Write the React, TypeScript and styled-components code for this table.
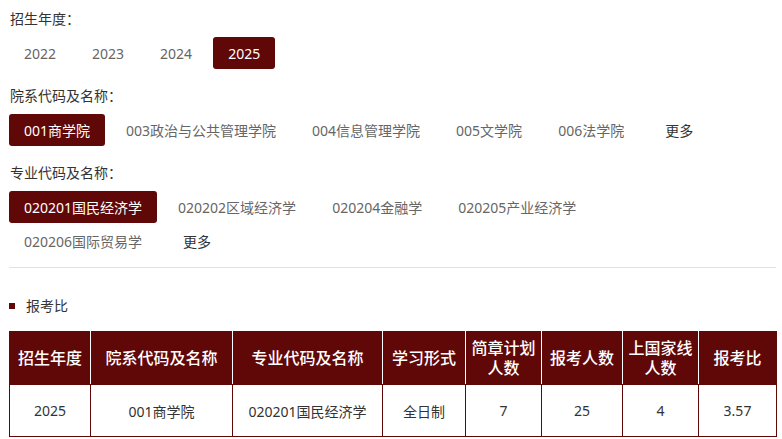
import React, { useState } from "react"
import styled, { createGlobalStyle } from "styled-components"

const GlobalStyle = createGlobalStyle`
  body {
    margin: 0;
    background: #ffffff;
    font-family: "Noto Sans", "Noto Sans CJK SC", sans-serif;
  }
`

const maroon = "#600808"

const Page = styled.div`
  padding: 8px 6px 0 9px;
  color: #333333;
`

const FilterGroup = styled.div<{ $last?: boolean }>`
  margin-bottom: ${(p) => (p.$last ? "0" : "16px")};
`

const Label = styled.div`
  font-size: 14px;
  line-height: 22px;
  color: #333333;
  padding-left: 1px;
  margin-bottom: 7px;
`

const Options = styled.div`
  display: flex;
  flex-wrap: wrap;
  gap: 2px 6px;
  max-width: 730px;
`

const Option = styled.button<{ $active?: boolean; $more?: boolean }>`
  height: 32px;
  padding: 0 ${(p) => (p.$more ? "20px" : "15px")};
  border: none;
  border-radius: 3px;
  font-family: inherit;
  font-size: 14px;
  cursor: pointer;
  background: ${(p) => (p.$active ? maroon : "transparent")};
  color: ${(p) => (p.$active ? "#ffffff" : p.$more ? "#333333" : "#666666")};
`

const Divider = styled.hr`
  margin: 10px 0 0;
  border: none;
  border-top: 1px solid #e2e2e2;
`

const SectionTitle = styled.div`
  display: flex;
  align-items: center;
  gap: 11px;
  margin: 27px 0 14px;
  font-size: 14px;
  line-height: 22px;
  color: #333333;
  &::before {
    content: "";
    width: 6px;
    height: 6px;
    background: ${maroon};
  }
`

const Table = styled.table`
  width: 767px;
  table-layout: fixed;
  border-collapse: collapse;
  border: 1px solid ${maroon};
`

const Th = styled.th`
  height: 52px;
  padding: 0 4px;
  background: ${maroon};
  color: #ffffff;
  font-size: 16px;
  font-weight: 500;
  line-height: 20px;
  border: 1px solid ${maroon};
  border-right-color: #ffffff;
  &:last-child {
    border-right-color: ${maroon};
  }
`

const Td = styled.td`
  height: 49px;
  text-align: center;
  font-size: 14px;
  color: #333333;
  border: 1px solid ${maroon};
`

const years = ["2022", "2023", "2024", "2025"]
const depts = ["001商学院", "003政治与公共管理学院", "004信息管理学院", "005文学院", "006法学院"]
const majors = ["020201国民经济学", "020202区域经济学", "020204金融学", "020205产业经济学", "020206国际贸易学"]
const widths = [81, 142, 150, 83, 76, 81, 76, 78]
const headers = [
  ["招生年度"],
  ["院系代码及名称"],
  ["专业代码及名称"],
  ["学习形式"],
  ["简章计划", "人数"],
  ["报考人数"],
  ["上国家线", "人数"],
  ["报考比"],
]
const row = ["2025", "001商学院", "020201国民经济学", "全日制", "7", "25", "4", "3.57"]

const App: React.FC = () => {
  const [year, setYear] = useState("2025")
  const [dept, setDept] = useState("001商学院")
  const [major, setMajor] = useState("020201国民经济学")

  return (
    <Page>
      <GlobalStyle />
      <FilterGroup>
        <Label>招生年度：</Label>
        <Options>
          {years.map((y) => (
            <Option key={y} $active={y == year} onClick={() => setYear(y)}>
              {y}
            </Option>
          ))}
        </Options>
      </FilterGroup>

      <FilterGroup>
        <Label>院系代码及名称：</Label>
        <Options>
          {depts.map((d) => (
            <Option key={d} $active={d == dept} onClick={() => setDept(d)}>
              {d}
            </Option>
          ))}
          <Option $more>更多</Option>
        </Options>
      </FilterGroup>

      <FilterGroup $last>
        <Label>专业代码及名称：</Label>
        <Options>
          {majors.map((m) => (
            <Option key={m} $active={m == major} onClick={() => setMajor(m)}>
              {m}
            </Option>
          ))}
          <Option $more>更多</Option>
        </Options>
      </FilterGroup>

      <Divider />

      <SectionTitle>报考比</SectionTitle>

      <Table>
        <colgroup>
          {widths.map((w, i) => (
            <col key={i} style={{ width: w }} />
          ))}
        </colgroup>
        <thead>
          <tr>
            {headers.map((h, i) => (
              <Th key={i}>
                {h.map((line, j) => (
                  <div key={j}>{line}</div>
                ))}
              </Th>
            ))}
          </tr>
        </thead>
        <tbody>
          <tr>
            {row.map((c, i) => (
              <Td key={i}>{c}</Td>
            ))}
          </tr>
        </tbody>
      </Table>
    </Page>
  )
}

export default App
